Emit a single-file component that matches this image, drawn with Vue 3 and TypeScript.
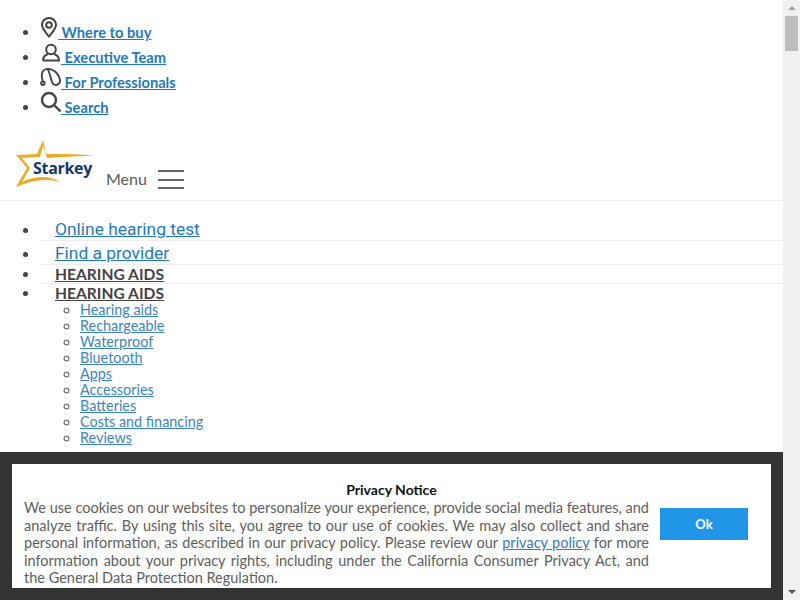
<script setup lang="ts">
const topLinks = [
  { label: 'Where to buy', icon: 'pin' },
  { label: 'Executive Team', icon: 'person' },
  { label: 'For Professionals', icon: 'aid' },
  { label: 'Search', icon: 'search' },
]
const subLinks = ['Hearing aids', 'Rechargeable', 'Waterproof', 'Bluetooth', 'Apps', 'Accessories', 'Batteries', 'Costs and financing', 'Reviews']
</script>

<template>
  <div class="page">
    <main class="content">
      <ul class="top-list">
        <li v-for="l in topLinks" :key="l.label">
          <a href="#">
            <svg v-if="l.icon === 'pin'" class="ico" width="18" height="22" viewBox="0 0 18 22" fill="none" stroke="#444" stroke-width="2">
              <path d="M9 20.500C5.500 16 2 12.500 2 9a7 7 0 0 1 14 0C16 12.500 12.500 16 9 20.500z" />
              <circle cx="9" cy="9" r="2.800" />
            </svg>
            <svg v-else-if="l.icon === 'person'" class="ico" width="21" height="22" viewBox="0 0 21 22" fill="none" stroke="#444" stroke-width="2">
              <circle cx="11" cy="8.500" r="4.800" />
              <path d="M3 19.500h16c0-3.500-2-5.500-5-6.500M3 19.500c0-3.500 2-5.500 5-6.500" />
            </svg>
            <svg v-else-if="l.icon === 'aid'" class="ico" width="21" height="22" viewBox="0 0 22 22" fill="none" stroke="#444" stroke-width="2">
              <path d="M3 15C1 10 1 3 8 2.500C14 2 20 8 21 14C21.500 19 16 21 13.500 18C11.500 15 11 8 8 2.500" />
              <circle cx="3" cy="17.500" r="1.800" />
            </svg>
            <svg v-else class="ico" width="21" height="22" viewBox="0 0 21 22" fill="none" stroke="#444" stroke-width="2.400">
              <circle cx="9" cy="9" r="7" />
              <path d="M14 14l6.500 6.500" />
            </svg>
            {{ ' ' + l.label }}
          </a>
        </li>
      </ul>

      <header class="brand">
        <span class="logo">
          <svg width="80" height="50" viewBox="0 0 80 50">
            <path d="M0 48L11 29L0 16L21 15L27 1L30 15C50 15 66 15 77 17C62 17 45 18 31 19L27 7L24 18L6 19L14 29L6 43C18 37 34 36 44 43C32 39 16 41 0 48Z" fill="#e8ae2a" />
          </svg>
          <span class="logo-text">Starkey</span>
        </span>
        <span class="menu-label">Menu</span>
        <span class="burger"><i></i><i></i><i></i></span>
      </header>

      <ul class="nav-list">
        <li class="big first"><a href="#">Online hearing test</a></li>
        <li class="big second"><a href="#">Find a provider</a></li>
        <li class="head third"><a href="#" class="dark">HEARING AIDS</a></li>
        <li class="head">
          <a href="#" class="dark">HEARING AIDS</a>
          <ul class="sub-list">
            <li v-for="s in subLinks" :key="s"><a href="#">{{ s }}</a></li>
          </ul>
        </li>
      </ul>

      <section class="cookie">
        <div class="cookie-box">
          <div class="cookie-title">Privacy Notice</div>
          <div class="cookie-row">
            <p>We use cookies on our websites to personalize your experience, provide social media features, and analyze traffic. By using this site, you agree to our use of cookies. We may also collect and share personal information, as described in our privacy policy. Please review our <a href="#">privacy policy</a> for more information about your privacy rights, including under the California Consumer Privacy Act, and the General Data Protection Regulation.</p>
            <button class="ok">Ok</button>
          </div>
        </div>
      </section>
    </main>
    <aside class="scrollbar">
      <span class="arrow up"></span>
      <span class="thumb"></span>
      <span class="spacer"></span>
      <span class="arrow down"></span>
    </aside>
  </div>
</template>

<style>
html, body { margin: 0; height: 100%; overflow: hidden; background: #fff; }
</style>

<style scoped>
.page { display: flex; width: 800px; height: 600px; overflow: hidden; font-family: Lato, "Liberation Sans", sans-serif; color: #444; }
.content { position: relative; flex: 1; min-width: 0; height: 600px; overflow: hidden; }
a { color: #1f7ab8; }
.top-list { margin: 16px 0 0; padding: 0 0 0 40px; font-size: 14.700px; font-weight: 700; line-height: 25px; }
.top-list li { height: 25px; white-space: nowrap; }
.ico { vertical-align: baseline; }
.brand { display: flex; align-items: flex-end; height: 60px; margin-top: 24px; padding: 0 0 0 16px; border-bottom: 1px solid #eee; }
.logo { position: relative; width: 80px; height: 50px; margin-bottom: 11px; }
.logo svg { display: block; }
.logo-text { position: absolute; left: 17px; top: 18px; font: 700 16px "Open Sans", sans-serif; color: #12386b; letter-spacing: -0.3px; }
.menu-label { margin: 0 0 11px 10px; font-size: 16px; color: #5a5a5a; line-height: 20px; }
.burger { display: flex; flex-direction: column; gap: 6.500px; width: 26px; margin: 0 0 11px 11px; }
.burger i { height: 2px; background: #666; display: block; }
.nav-list { margin: 16px 0 0; padding: 0 0 0 40px; }
.big { font: 400 17.400px Roboto, sans-serif; padding-left: 15px; border-bottom: 1px solid #eee; }
.first { height: 23px; line-height: 24px; }
.second { height: 23px; line-height: 24px; }
.head { padding-left: 15px; font-size: 15.600px; font-weight: 700; line-height: 18px; }
.third { height: 18px; border-bottom: 1px solid #eee; }
.dark { color: #444; }
.sub-list { margin: 0; padding: 0 0 0 25px; font-size: 14.400px; font-weight: 400; line-height: 16px; list-style: circle; }
.sub-list a { color: #3a86c0; }
.cookie { position: absolute; left: 0; right: 0; bottom: 0; height: 148px; box-sizing: border-box; padding: 12px; background: #333; }
.cookie-box { height: 124px; box-sizing: border-box; padding: 17px 23px 0 12px; background: #fff; overflow: hidden; }
.cookie-title { text-align: center; font-size: 14px; font-weight: 700; color: #111; line-height: 18px; margin-right: -11px; }
.cookie-row { display: flex; align-items: flex-start; gap: 11px; }
.cookie-row p { flex: 1; margin: 0; font-size: 14.500px; line-height: 17.500px; text-align: justify; color: #5e5e5e; }
.cookie-row a { color: #3a7ab5; }
.ok { flex: none; width: 88px; height: 32px; margin-top: 9px; border: 0; background: #2196e8; color: #fff; font: 700 13px Lato, sans-serif; }
.scrollbar { display: flex; flex-direction: column; align-items: center; width: 17px; background: #f1f1f1; }
.arrow { width: 0; height: 0; border-left: 4px solid transparent; border-right: 4px solid transparent; margin: 6px 0; }
.up { border-bottom: 4px solid #a3a3a3; }
.down { border-top: 4px solid #505050; }
.thumb { width: 13px; height: 35px; background: #bdbdbd; }
.spacer { flex: 1; }
</style>
